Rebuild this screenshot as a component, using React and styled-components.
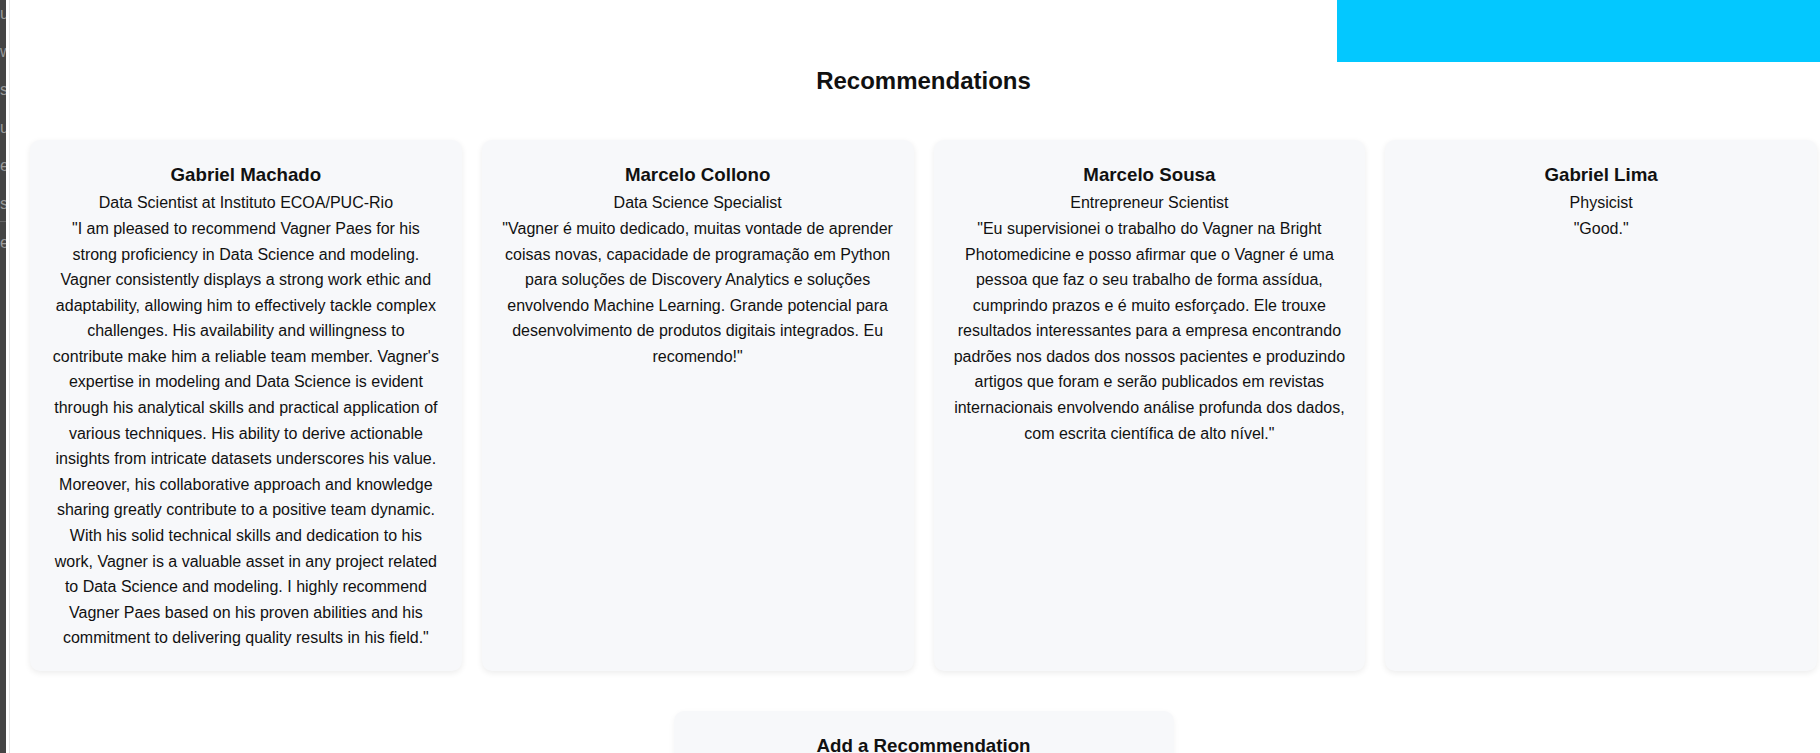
import styled, { createGlobalStyle } from "styled-components";

const GlobalStyle = createGlobalStyle`
    html, body {
    margin: 0;
    padding: 0;
    overflow: hidden;
    background: #fff;
    font-family: "Liberation Sans", Arial, sans-serif;
    color: #111;
    }
    *, *::before, *::after {
    box-sizing: border-box;
    }
`;

const Page = styled.div`
    display: flex;
    width: 100vw;
    height: 100vh;
    overflow: hidden;
`;

const Side = styled.nav`
    flex: 0 0 6px;
    background-color: #444;
    overflow: hidden;
    padding-top: 5px;
    display: flex;
    flex-direction: column;
    gap: 20px;
    & span {
    display: block;
    color: #9a9a9a;
    font-size: 16px;
    line-height: 18px;
    white-space: nowrap;
    }
    & hr {
    border: 0;
    border-top: 1px solid #666;
    margin: -12px 0 -8px;
    }
`;

const Main = styled.main`
    flex: 0 0 1828px;
    margin-left: 3px;
    border-left: 1px solid #e5e5e5;
`;

const TopBar = styled.div`
    display: flex;
    justify-content: flex-end;
`;

const Banner = styled.div`
    width: 500px;
    height: 62px;
    background-color: #03c8ff;
`;

const Section = styled.section`
    padding: 0 20px;
`;

const Title = styled.h2`
    margin: 0 0 40px;
    font-size: 24px;
    line-height: 1.6;
    text-align: center;
`;

const Grid = styled.div`
    display: grid;
    grid-template-columns: repeat(4, 1fr);
    gap: 20px;
`;

const Card = styled.div`
    background-color: #f7f8fa;
    border-radius: 10px;
    box-shadow: 0 2px 6px rgba(0, 0, 0, 0.08);
    padding: 20px;
    text-align: center;
    font-size: 16px;
    line-height: 1.6;
    & h3 {
    margin: 0;
    font-size: 18.72px;
    line-height: 1.6;
    }
    & p {
    margin: 0;
    }
`;

const AddBox = styled.div`
    width: 500px;
    margin: 40px auto 0;
    background-color: #f7f8fa;
    border-radius: 10px;
    box-shadow: 0 2px 6px rgba(0, 0, 0, 0.05);
    padding: 20px;
    text-align: center;
    & h3 {
    margin: 0 0 16px;
    font-size: 18.72px;
    line-height: 1.6;
    }
`;

const Field = styled.input`
    display: block;
    width: 100%;
    padding: 8px;
    margin-bottom: 10px;
    border: 1px solid #ccc;
    border-radius: 6px;
    font: inherit;
`;

const recommendations = [
    {
        name: "Gabriel Machado",
        role: "Data Scientist at Instituto ECOA/PUC-Rio",
        text: "I am pleased to recommend Vagner Paes for his strong proficiency in Data Science and modeling. Vagner consistently displays a strong work ethic and adaptability, allowing him to effectively tackle complex challenges. His availability and willingness to contribute make him a reliable team member. Vagner's expertise in modeling and Data Science is evident through his analytical skills and practical application of various techniques. His ability to derive actionable insights from intricate datasets underscores his value. Moreover, his collaborative approach and knowledge sharing greatly contribute to a positive team dynamic. With his solid technical skills and dedication to his work, Vagner is a valuable asset in any project related to Data Science and modeling. I highly recommend Vagner Paes based on his proven abilities and his commitment to delivering quality results in his field.",
    },
    {
        name: "Marcelo Collono",
        role: "Data Science Specialist",
        text: "Vagner é muito dedicado, muitas vontade de aprender coisas novas, capacidade de programação em Python para soluções de Discovery Analytics e soluções envolvendo Machine Learning. Grande potencial para desenvolvimento de produtos digitais integrados. Eu recomendo!",
    },
    {
        name: "Marcelo Sousa",
        role: "Entrepreneur Scientist",
        text: "Eu supervisionei o trabalho do Vagner na Bright Photomedicine e posso afirmar que o Vagner é uma pessoa que faz o seu trabalho de forma assídua, cumprindo prazos e é muito esforçado. Ele trouxe resultados interessantes para a empresa encontrando padrões nos dados dos nossos pacientes e produzindo artigos que foram e serão publicados em revistas internacionais envolvendo análise profunda dos dados, com escrita científica de alto nível.",
    },
    {
        name: "Gabriel Lima",
        role: "Physicist",
        text: "Good.",
    },
];

const App = () => {
    return (
        <>
            <GlobalStyle />
            <Page>
                <Side>
                    <span>u</span>
                    <span>w</span>
                    <span>si</span>
                    <span>u</span>
                    <span>e</span>
                    <span>sl</span>
                    <hr />
                    <span>e</span>
                </Side>
                <Main>
                    <TopBar>
                        <Banner />
                    </TopBar>
                    <Section>
                        <Title>Recommendations</Title>
                        <Grid>
                            {recommendations.map((r) => (
                                <Card key={r.name}>
                                    <h3>{r.name}</h3>
                                    <p>{r.role}</p>
                                    <p>"{r.text}"</p>
                                </Card>
                            ))}
                        </Grid>
                        <AddBox>
                            <h3>Add a Recommendation</h3>
                            <Field placeholder="Your name" />
                            <Field placeholder="Your role" />
                            <Field placeholder="Your recommendation" />
                        </AddBox>
                    </Section>
                </Main>
            </Page>
        </>
    )
}

export default App;
